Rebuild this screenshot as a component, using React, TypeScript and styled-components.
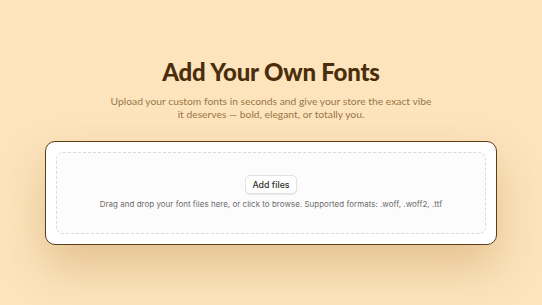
import React from "react";
import styled, { createGlobalStyle } from "styled-components";

const Global = createGlobalStyle`
  html, body { margin: 0; padding: 0; }
  body {
    background: #fde4bd;
    width: 542px;
    height: 305px;
    overflow: hidden;
  }
`;

const Page = styled.main`
  height: 305px;
  display: flex;
  flex-direction: column;
  align-items: center;
  padding-top: 57px;
  box-sizing: border-box;
  background: #fde4bd;
`;

const Title = styled.h1`
  margin: 0;
  font-family: "Lato", sans-serif;
  font-weight: 900;
  font-size: 24px;
  line-height: 30px;
  color: #4a2e0b;
  letter-spacing: -0.2px;
`;

const Subtitle = styled.p`
  margin: 8px 0 0;
  font-family: "Lato", sans-serif;
  font-weight: 400;
  font-size: 10.3px;
  line-height: 13.3px;
  color: #9a7747;
  text-align: center;
  width: 340px;
`;

const Card = styled.section`
  margin-top: 19px;
  width: 452px;
  height: 104px;
  box-sizing: border-box;
  background: #ffffff;
  border: 1.5px solid #5b3d17;
  border-radius: 10px;
  padding: 10px;
  box-shadow: 0 22px 45px rgba(170, 120, 50, 0.32);
`;

const DropZone = styled.div`
  height: 100%;
  box-sizing: border-box;
  border: 1px dashed #d9d9d9;
  border-radius: 7px;
  background: #fcfcfc;
  display: flex;
  flex-direction: column;
  align-items: center;
  justify-content: center;
  gap: 5px;
`;

const Button = styled.button`
  height: 19px;
  padding: 0 6px;
  background: #ffffff;
  border: 1px solid #e1e1e1;
  border-radius: 5px;
  box-shadow: 0 1px 1px rgba(0, 0, 0, 0.08);
  font-family: "Inter", sans-serif;
  font-weight: 500;
  font-size: 8.8px;
  color: #303030;
  cursor: pointer;
`;

const Hint = styled.p`
  margin: 0;
  font-family: "Inter", sans-serif;
  font-size: 7.95px;
  letter-spacing: 0.04px;
  line-height: 11px;
  color: #6b6b6b;
  white-space: nowrap;
`;

export default function App() {
  return (
    <>
      <Global />
      <Page>
        <Title>Add Your Own Fonts</Title>
        <Subtitle>
          Upload your custom fonts in seconds and give your store the exact vibe
          <br />
          it deserves — bold, elegant, or totally you.
        </Subtitle>
        <Card>
          <DropZone>
            <Button>Add files</Button>
            <Hint>
              Drag and drop your font files here, or click to browse. Supported formats: .woff, .woff2, .ttf
            </Hint>
          </DropZone>
        </Card>
      </Page>
    </>
  );
}
